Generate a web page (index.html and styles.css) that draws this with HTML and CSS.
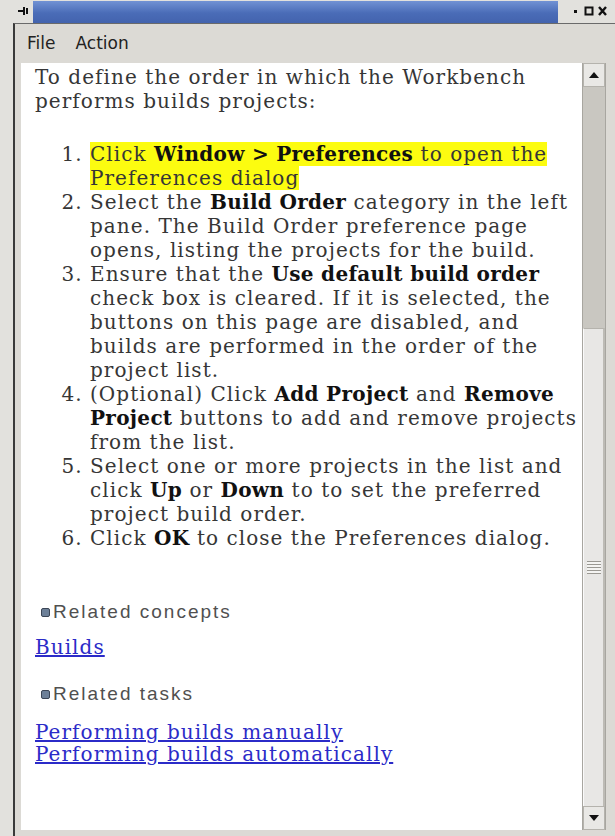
FILE: index.html
```html
<!DOCTYPE html>
<html>
<head>
<meta charset="utf-8">
<title>Help</title>
<link rel="stylesheet" href="styles.css">
</head>
<body>
<div class="screen">
  <div class="titlebar">
    <div class="pin">
      <svg width="12" height="10" viewBox="0 0 12 10"><path d="M0 4h5V1h2v8H5V6H0z M8 2h2v6H8z" fill="#111"/></svg>
    </div>
    <div class="caption"></div>
    <div class="controls">
      <svg width="40" height="12" viewBox="0 0 40 12">
        <rect x="3" y="5" width="3" height="3" fill="#111"/>
        <rect x="14.5" y="2.5" width="7" height="7" fill="none" stroke="#111" stroke-width="2"/>
        <path d="M28 2l7 8M35 2l-7 8" stroke="#111" stroke-width="2.4"/>
      </svg>
    </div>
  </div>
  <div class="window">
    <div class="menubar">
      <span class="menu">File</span>
      <span class="menu">Action</span>
    </div>
    <div class="pane">
      <div class="doc">
        <p class="intro">To define the order in which the Workbench<br>performs builds projects:</p>
        <ol class="steps">
          <li><span class="hl">Click <b>Window &gt; Preferences</b> to open the<br>Preferences dialog</span></li>
          <li>Select the <b>Build Order</b> category in the left<br>pane. The Build Order preference page<br>opens, listing the projects for the build.</li>
          <li>Ensure that the <b>Use default build order</b><br>check box is cleared. If it is selected, the<br>buttons on this page are disabled, and<br>builds are performed in the order of the<br>project list.</li>
          <li>(Optional) Click <b>Add Project</b> and <b>Remove</b><br><b>Project</b> buttons to add and remove projects<br>from the list.</li>
          <li>Select one or more projects in the list and<br>click <b>Up</b> or <b>Down</b> to to set the preferred<br>project build order.</li>
          <li>Click <b>OK</b> to close the Preferences dialog.</li>
        </ol>
        <div class="related">
          <h4 class="rel-head"><span class="bullet"></span>Related concepts</h4>
          <a class="link" href="#">Builds</a>
        </div>
        <div class="related">
          <h4 class="rel-head"><span class="bullet"></span>Related tasks</h4>
          <a class="link" href="#">Performing builds manually</a>
          <a class="link" href="#">Performing builds automatically</a>
        </div>
      </div>
      <div class="scrollbar">
        <div class="sb-btn"><svg width="10" height="6" viewBox="0 0 10 6"><path d="M5 0L10 6H0z" fill="#111"/></svg></div>
        <div class="sb-track">
          <div class="sb-thumb"><span class="grip"></span></div>
        </div>
        <div class="sb-btn"><svg width="10" height="6" viewBox="0 0 10 6"><path d="M0 0h10L5 6z" fill="#111"/></svg></div>
      </div>
    </div>
  </div>
</div>
</body>
</html>
```

FILE: styles.css
```css
* { box-sizing: border-box; }

html, body {
  margin: 0;
  padding: 0;
  width: 615px;
  height: 836px;
  overflow: hidden;
  background: #e2e1dd;
}

.screen {
  width: 615px;
  height: 836px;
  display: flex;
  flex-direction: column;
}

/* window title bar */
.titlebar {
  height: 23px;
  display: flex;
  background: #e2e1dd;
}
.pin {
  width: 33px;
  display: flex;
  align-items: center;
  justify-content: flex-end;
  padding: 0 3px 2px 0;
}
.caption {
  flex: 1;
  margin-top: 1px;
  height: 22px;
  background: linear-gradient(#7192d4, #4a6cb7 55%, #4363ae);
}
.controls {
  width: 57px;
  display: flex;
  align-items: center;
  justify-content: flex-end;
  padding: 0 4px 2px 0;
}

/* window body */
.window {
  flex: 1;
  margin-left: 13px;
  border-left: 2px solid #3a3a3a;
  border-top: 1px solid #6a6a6a;
  background: #dcdad5;
  display: flex;
  flex-direction: column;
  padding: 0 2px 6px 6px;
  min-height: 0;
}

.menubar {
  height: 39px;
  display: flex;
  align-items: center;
  gap: 20px;
  padding: 0 0 1px 6px;
  font-family: "DejaVu Sans", sans-serif;
  font-size: 17px;
  color: #222;
}

.pane {
  flex: 1;
  display: flex;
  background: #fff;
  min-height: 0;
  border-right: 7px solid #dcdad5;
}

.doc {
  flex: 1;
  min-width: 0;
  padding: 2px 0 0 14px;
  font-family: "DejaVu Serif", serif;
  font-size: 20px;
  letter-spacing: 1.05px;
  line-height: 24px;
  color: #363636;
  white-space: nowrap;
  overflow: hidden;
}
.doc b { color: #111; letter-spacing: 0.3px; }

.intro { margin: 0 0 29px; }

.steps {
  margin: 0;
  padding-left: 55px;
}
.hl { background: #fcfc10; }

.related { margin-top: 52px; }
.related + .related { margin-top: 26px; }
.rel-head {
  margin: 0 0 14px 6px;
  display: flex;
  align-items: center;
  gap: 3px;
  font-family: "Liberation Sans", Arial, sans-serif;
  font-weight: normal;
  font-size: 19px;
  letter-spacing: 2px;
  line-height: 20px;
  color: #505050;
}
.related + .related .rel-head { margin-bottom: 17px; }
.bullet {
  width: 9px;
  height: 9px;
  border-radius: 2px;
  background: #6d8098;
  border: 1px solid #3c4656;
}
.link {
  display: block;
  width: max-content;
  color: #2b2bc8;
  text-decoration: underline;
  line-height: 22px;
}

/* vertical scrollbar */
.scrollbar {
  width: 24px;
  flex: none;
  display: flex;
  flex-direction: column;
  background: #c9c7c1;
  border-left: 1px solid #a8a6a0;
  border-right: 1px solid #a8a6a0;
}
.sb-btn {
  height: 24px;
  display: flex;
  align-items: center;
  justify-content: center;
  background: #e9e8e5;
  border: 1px solid #b5b3ad;
}
.sb-track {
  flex: 1;
  display: flex;
  flex-direction: column;
  padding-top: 241px;
}
.sb-thumb {
  flex: 1;
  background: #e8e7e5;
  border-left: 1px solid #fafafa;
  border-right: 2px solid #bdbbb5;
  border-top: 1px solid #b5b3ad;
  display: flex;
  align-items: center;
  justify-content: center;
}
.grip {
  width: 14px;
  height: 13px;
  background: repeating-linear-gradient(#9a9892 0 1px, #f4f4f2 1px 3px);
}
```
